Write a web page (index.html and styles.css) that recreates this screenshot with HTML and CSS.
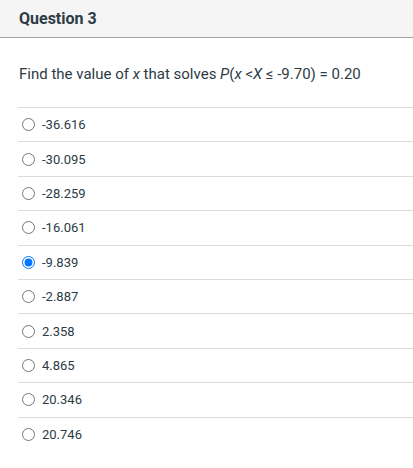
FILE: index.html
```html
<!DOCTYPE html>
<html>
<head>
<meta charset="utf-8">
<link rel="stylesheet" href="styles.css">
</head>
<body>
<div class="header"><h2 class="title">Question 3</h2></div>
<div class="content">
  <p class="prompt">Find the value of <i>x</i> that solves <i>P</i>(<i>x</i> &lt;<i>X</i> ≤ -9.70) = 0.20</p>
  <ul class="answers">
    <li class="answer"><label><input type="radio" name="q3"><span>-36.616</span></label></li>
    <li class="answer"><label><input type="radio" name="q3"><span>-30.095</span></label></li>
    <li class="answer"><label><input type="radio" name="q3"><span>-28.259</span></label></li>
    <li class="answer"><label><input type="radio" name="q3"><span>-16.061</span></label></li>
    <li class="answer"><label><input type="radio" name="q3" checked><span>-9.839</span></label></li>
    <li class="answer"><label><input type="radio" name="q3"><span>-2.887</span></label></li>
    <li class="answer"><label><input type="radio" name="q3"><span>2.358</span></label></li>
    <li class="answer"><label><input type="radio" name="q3"><span>4.865</span></label></li>
    <li class="answer"><label><input type="radio" name="q3"><span>20.346</span></label></li>
    <li class="answer"><label><input type="radio" name="q3"><span>20.746</span></label></li>
  </ul>
</div>
</body>
</html>
```

FILE: styles.css
```css
html, body {
  margin: 0;
  padding: 0;
  background: #ffffff;
  font-family: Roboto, "Liberation Sans", sans-serif;
  color: #2d3b45;
}
.header {
  background: #f5f5f5;
  height: 37px;
  border-bottom: 1px solid #a5a5a5;
  box-sizing: content-box;
  display: flex;
  align-items: center;
  padding-left: 19px;
}
.title {
  margin: 0;
  font-size: 16px;
  font-weight: 700;
  color: #2d3b45;
}
.content {
  padding-left: 18px;
}
.prompt {
  margin: 0;
  padding: 26px 0 23px 1px;
  line-height: 20px;
  font-size: 15px;
}
.answers {
  list-style: none;
  margin: 0;
  padding: 0;
  border-top: 1px solid #dcdcdc;
}
.answer {
  height: 33.4px;
  border-bottom: 1px solid #dcdcdc;
  display: flex;
  align-items: center;
}
.answer:last-child {
  border-bottom: none;
}
.answer label {
  display: flex;
  align-items: center;
  font-size: 13px;
}
.answer input {
  margin: 0 7px 0 4px;
  width: 13px;
  height: 13px;
}
```
